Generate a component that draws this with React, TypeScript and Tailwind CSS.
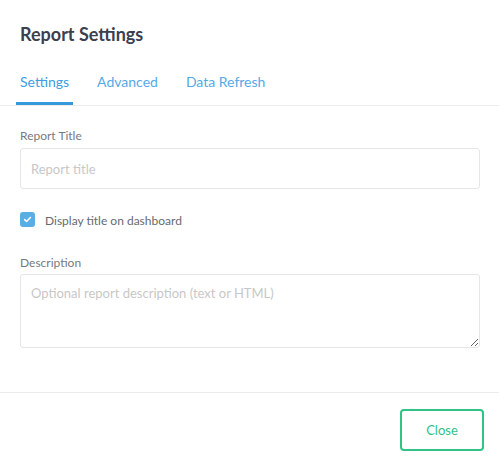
export default function App() {
  const tabs = ['Settings', 'Advanced', 'Data Refresh'];
  const active = 'Settings';

  return (
    <div className="w-[499px] h-[464px] bg-white flex flex-col font-['Lato',sans-serif]">
      {/* Header */}
      <div className="pt-[22px]">
        <h2 className="px-5 text-[18px] leading-6 font-bold text-[#3b4051]">Report Settings</h2>
        <div className="mt-[26px] flex gap-5 pl-4 border-b border-[#ececec]">
          {tabs.map(tab => (
            <div
              key={tab}
              className={`px-1 pb-[10px] text-[14px] leading-5 border-b-[3px] ${
                tab === active ? 'border-[#3498db] text-[#3d9ee0]' : 'border-transparent text-[#55aae6]'
              }`}
            >
              {tab}
            </div>
          ))}
        </div>
      </div>

      {/* Body */}
      <div className="flex-1 pl-5 pr-[19px] pt-[22px]">
        <label className="block text-[12px] leading-4 text-[#777a80] mb-1">Report Title</label>
        <input
          className="w-full h-[41px] border border-[#e6e6e6] rounded-[3px] px-[10px] text-[13px] text-[#333] placeholder:text-[#c8c8c8] outline-none"
          placeholder="Report title"
        />

        <div className="mt-[23px] flex items-start gap-[10px]">
          <span className="w-[15px] h-[15px] rounded-[3px] bg-[#5aaee6] flex items-center justify-center">
            <svg width="9" height="9" viewBox="0 0 10 10" fill="none">
              <path d="M1.8 5.2 L4 7.2 L8.2 2.8" stroke="white" strokeWidth="1.8" strokeLinecap="round" strokeLinejoin="round" />
            </svg>
          </span>
          <span className="pt-[1px] text-[12px] leading-4 text-[#666a70]">Display title on dashboard</span>
        </div>

        <label className="block mt-[26px] text-[12px] leading-4 text-[#777a80] mb-[3px]">Description</label>
        <textarea
          className="w-full h-[74px] block border border-[#e6e6e6] rounded-[3px] px-[10px] py-[9px] text-[13px] leading-[18px] text-[#333] placeholder:text-[#c8c8c8] outline-none resize-y"
          placeholder="Optional report description (text or HTML)"
        />
      </div>

      {/* Footer */}
      <div className="border-t border-[#ececec] pt-4 pb-[13px] pr-[15px] flex justify-end">
        <button className="w-[84px] h-[42px] border-2 border-[#2fc486] rounded-[4px] pt-[2px] text-[13px] text-[#2fc486] bg-white">
          Close
        </button>
      </div>
    </div>
  );
}
